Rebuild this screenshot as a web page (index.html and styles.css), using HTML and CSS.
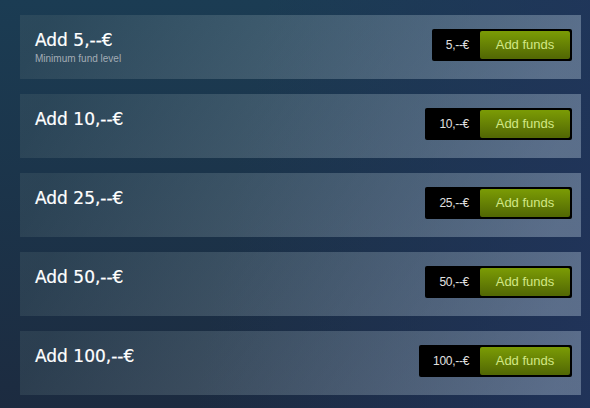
FILE: index.html
```html
<!DOCTYPE html>
<html lang="en">
<head>
    <meta charset="UTF-8">
    <meta name="viewport" content="width=device-width, initial-scale=1.0">
    <title>Add funds</title>
    <link rel="stylesheet" href="styles.css">
</head>
<body>
    <main class="funds">
        <div class="fund-row">
            <div class="fund-info">
                <h2>Add 5,--€</h2>
                <p>Minimum fund level</p>
            </div>
            <div class="fund-action">
                <span class="fund-price">5,--€</span>
                <a href="#" class="btn-add">Add funds</a>
            </div>
        </div>
        <div class="fund-row">
            <div class="fund-info">
                <h2>Add 10,--€</h2>
            </div>
            <div class="fund-action">
                <span class="fund-price">10,--€</span>
                <a href="#" class="btn-add">Add funds</a>
            </div>
        </div>
        <div class="fund-row">
            <div class="fund-info">
                <h2>Add 25,--€</h2>
            </div>
            <div class="fund-action">
                <span class="fund-price">25,--€</span>
                <a href="#" class="btn-add">Add funds</a>
            </div>
        </div>
        <div class="fund-row">
            <div class="fund-info">
                <h2>Add 50,--€</h2>
            </div>
            <div class="fund-action">
                <span class="fund-price">50,--€</span>
                <a href="#" class="btn-add">Add funds</a>
            </div>
        </div>
        <div class="fund-row">
            <div class="fund-info">
                <h2>Add 100,--€</h2>
            </div>
            <div class="fund-action">
                <span class="fund-price">100,--€</span>
                <a href="#" class="btn-add">Add funds</a>
            </div>
        </div>
    </main>
</body>
</html>
```

FILE: styles.css
```css
/* styles.css */
html, body {
    height: 100%;
}

body {
    margin: 0;
    font-family: Arial, "Liberation Sans", sans-serif;
    background: linear-gradient(100deg, rgba(27, 60, 83, 0.0) 40%, rgba(33, 52, 92, 0.9) 100%),
                linear-gradient(to bottom, #1b3c53 0%, #1c2b40 100%);
    overflow: hidden;
}

.funds {
    display: flex;
    flex-direction: column;
    gap: 15px;
    padding: 15px 9px 0 20px;
}

.fund-row {
    height: 64px;
    display: flex;
    justify-content: space-between;
    align-items: flex-start;
    padding: 0 9px 0 15px;
    background: linear-gradient(-60deg, rgba(226, 244, 255, 0.3) 5%, rgba(84, 107, 115, 0.28) 95%);
}

.fund-info {
    padding-top: 15px;
}

.fund-info h2 {
    margin: 0;
    font-family: "DejaVu Sans", sans-serif;
    font-weight: normal;
    font-size: 17px;
    line-height: 21px;
    color: #fff;
    -webkit-text-stroke: 0.2px #fff;
}

.fund-info p {
    margin: 2px 0 0;
    font-size: 10px;
    line-height: 12px;
    color: #a3acb5;
}

.fund-action {
    margin-top: 14px;
    display: flex;
    align-items: center;
    background: #000;
    padding: 2px;
    border-radius: 2px;
}

.fund-price {
    padding: 0 11px 0 12px;
    font-size: 12px;
    color: #e0e0e0;
    letter-spacing: -0.3px;
}

.btn-add {
    display: block;
    width: 90px;
    height: 28px;
    line-height: 28px;
    text-align: center;
    font-size: 13px;
    color: #d2e885;
    text-decoration: none;
    border-radius: 2px;
    background: linear-gradient(to bottom, #799905 5%, #536904 95%);
}
```
